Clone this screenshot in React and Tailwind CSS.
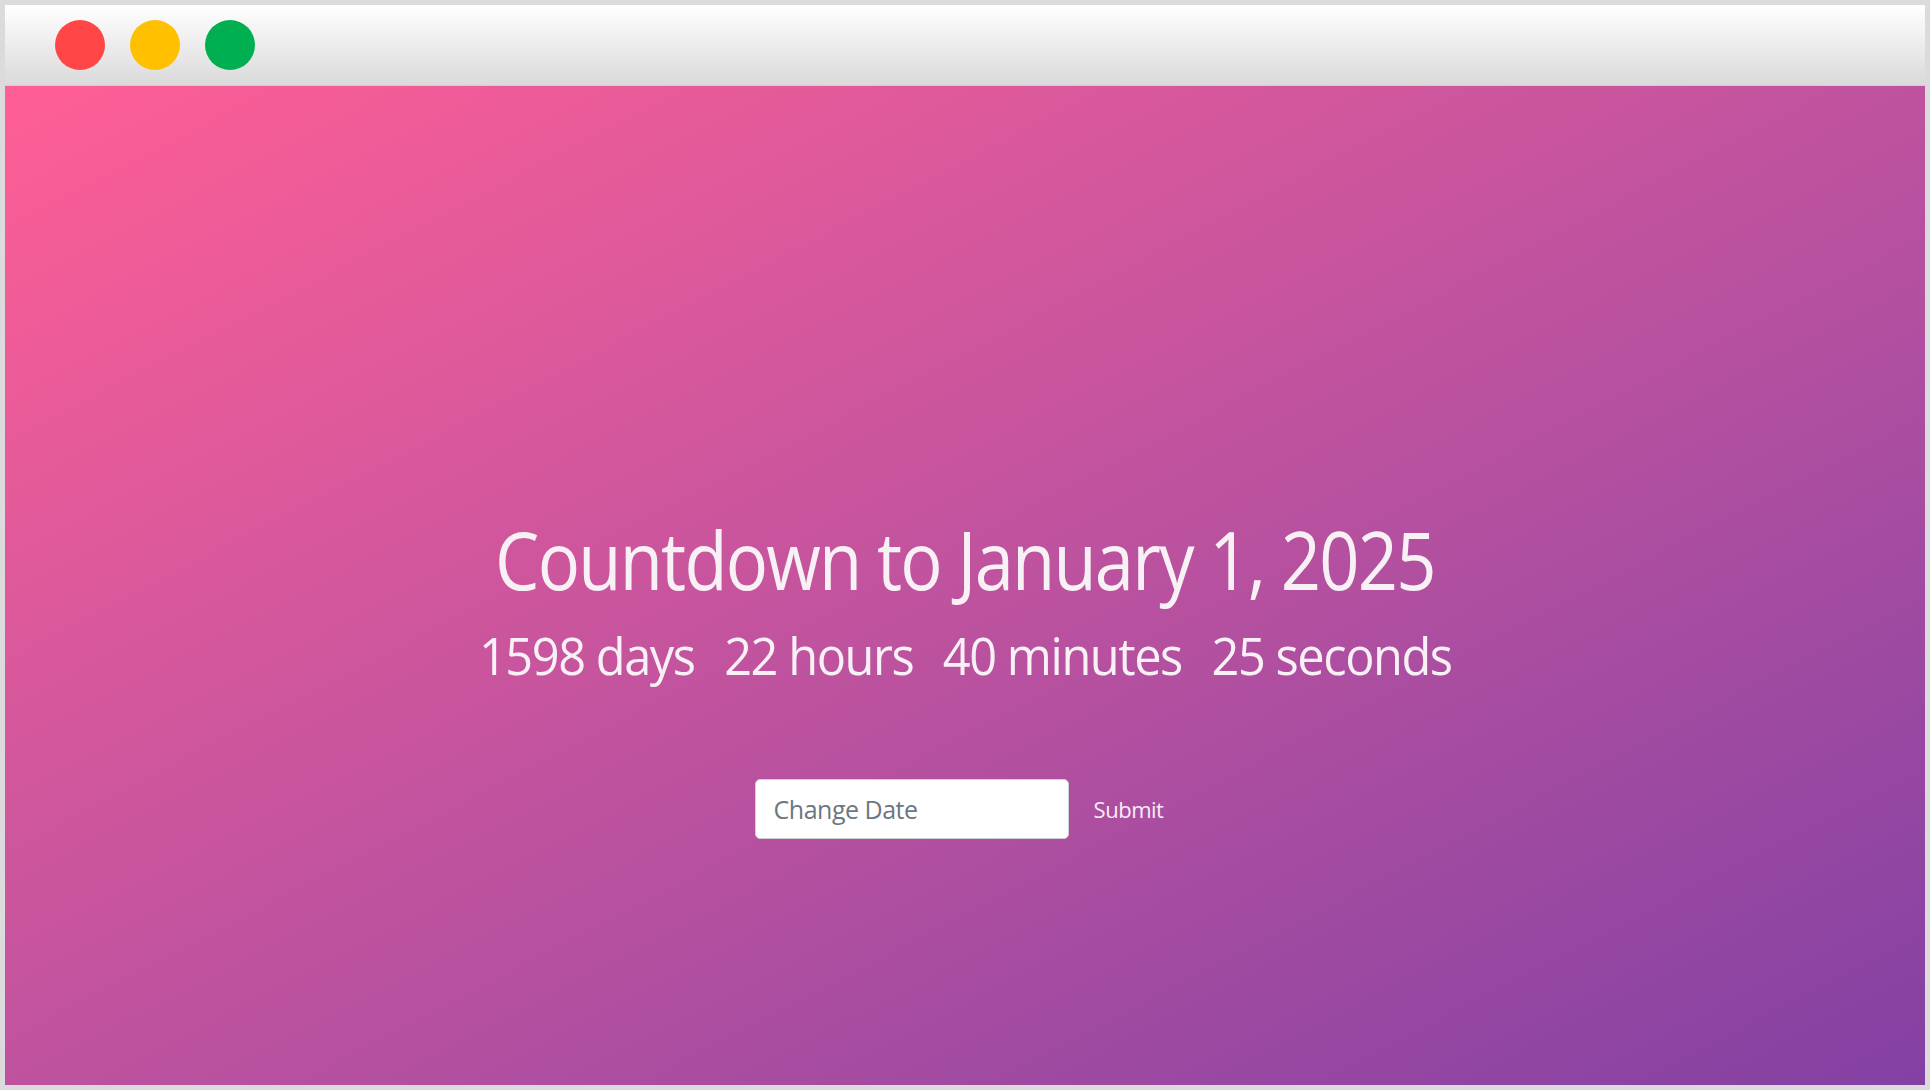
import React from "react";

export default function App() {
  return (
    <div className="w-[1930px] h-[1090px] bg-[#dcdadc] p-[5px] overflow-hidden">
      <div className="flex flex-col w-full h-full">
        <div className="h-[81px] shrink-0 flex items-center gap-[25px] pl-[50px] bg-gradient-to-b from-[#ffffff] to-[#dadada] border-b border-[#e6c2d2]">
          <div className="w-[50px] h-[50px] rounded-full bg-[#ff4545]" />
          <div className="w-[50px] h-[50px] rounded-full bg-[#ffc000]" />
          <div className="w-[50px] h-[50px] rounded-full bg-[#00b050]" />
        </div>
        <div
          className="flex-1 flex flex-col items-center bg-gradient-to-br from-[#ff5e95] to-[#8340a3] text-[#f7f1f5] pt-[425px]"
          style={{ fontFamily: '"Open Sans", "Noto Sans", sans-serif' }}
        >
          <h1 className="text-[80px] leading-[96px] tracking-[-2px] font-normal scale-x-[0.88]">
            Countdown to January 1, 2025
          </h1>
          <div className="flex gap-[31px] text-[51px] leading-[64px] tracking-[-1.5px] mt-[16px] scale-x-[0.955]">
            <span>1598 days</span>
            <span>22 hours</span>
            <span>40 minutes</span>
            <span>25 seconds</span>
          </div>
          <div className="flex items-center gap-[13px] mt-[92px]">
            <input
              type="text"
              placeholder="Change Date"
              className="w-[314px] h-[60px] rounded-[5px] bg-white border border-[#cfcfd4] px-[18px] text-[25px] tracking-[-0.5px] text-[#495057] placeholder:text-[#6c7782] outline-none"
            />
            <button className="px-[12px] py-[6px] text-[22px] tracking-[-0.5px] text-[#f7eef7] bg-transparent">
              Submit
            </button>
          </div>
        </div>
      </div>
    </div>
  );
}
